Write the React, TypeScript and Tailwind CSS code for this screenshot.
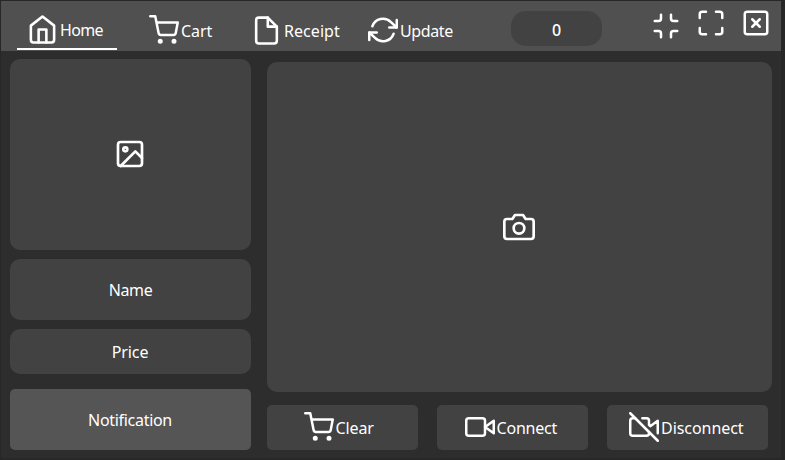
import type { ReactNode } from 'react';
import {
  FiCamera,
  FiFile,
  FiHome,
  FiImage,
  FiMaximize,
  FiMinimize,
  FiRefreshCw,
  FiShoppingCart,
  FiVideo,
  FiVideoOff,
  FiXSquare,
} from 'react-icons/fi';

function Label({ children, className = '' }: { children: ReactNode; className?: string }) {
  return <span className={`whitespace-nowrap leading-5 ${className}`}>{children}</span>;
}

function Header() {
  return (
    <header className="flex h-[50px] w-[780px] items-start bg-[#505050]">
      <nav className="flex h-full">
        <button className="ml-4 flex h-[49px] w-[100px] items-start border-b-2 border-white pl-[10px] pt-3">
          <FiHome size={31} className="mt-px" />
          <Label className="ml-[2px] mt-[7px] tracking-[-0.7px]">Home</Label>
        </button>
        <button className="ml-[32px] flex w-[64px] items-start pt-[13px]">
          <FiShoppingCart size={30} className="mt-px" />
          <Label className="ml-[2px] mt-[7px] tracking-[-0.1px]">Cart</Label>
        </button>
        <button className="ml-[38px] flex w-[90px] items-start pt-[13px]">
          <FiFile size={31} className="mt-px" />
          <Label className="ml-[2px] mt-[7px] tracking-[0.05px]">Receipt</Label>
        </button>
        <button className="ml-[26px] flex w-[87px] items-start pt-[13px]">
          <FiRefreshCw size={30} className="ml-px mt-px" />
          <Label className="ml-[2px] mt-[7px] tracking-[-0.4px]">Update</Label>
        </button>
      </nav>
      <div className="ml-[57px] mt-[10px] flex h-[35px] w-[91px] items-center justify-center rounded-[15px] bg-[#424242]">
        <Label className="mt-[3px] font-medium">0</Label>
      </div>
      <div className="ml-[49px] flex items-start gap-[15px] pt-[7px]">
        <FiMinimize size={30} className="mt-[3px]" />
        <FiMaximize size={30} />
        <FiXSquare size={30} />
      </div>
    </header>
  );
}

export default function App() {
  return (
    <div className="h-[460px] w-[785px] overflow-hidden border-l border-t border-[#272727] bg-[#2d2d2d] font-['Noto_Sans',sans-serif] text-[16px] text-white [font-variant-ligatures:none] tracking-[-0.3px] shadow-[inset_-4px_-2px_0_#272727]">
      <Header />
      <main className="flex pl-[9px]">
        <section className="flex w-[241px] flex-col pt-2">
          <div className="flex h-[191px] items-center justify-center rounded-[10px] bg-[#424242] pb-px pr-px">
            <FiImage size={32} />
          </div>
          <div className="mt-[9px] flex h-[61px] items-center justify-center rounded-[10px] bg-[#424242]">
            <Label className="tracking-[-0.4px]">Name</Label>
          </div>
          <div className="mt-[9px] flex h-[45px] items-center justify-center rounded-[10px] bg-[#424242] pr-px">
            <Label className="tracking-[-0.1px]">Price</Label>
          </div>
          <div className="mt-[15px] flex h-[61px] items-center justify-center rounded-[5px] bg-[#555555] pr-px">
            <Label>Notification</Label>
          </div>
        </section>
        <section className="ml-4 flex w-[505px] flex-col pt-[11px]">
          <div className="flex h-[330px] items-center justify-center rounded-[10px] bg-[#424242] pr-px">
            <FiCamera size={32} />
          </div>
          <div className="mt-[13px] flex gap-[19px]">
            <button className="flex h-[45px] w-[151px] items-start rounded-[5px] bg-[#424242] pl-[37px] pt-[7px]">
              <FiShoppingCart size={30} />
              <Label className="ml-[1.5px] mt-[6px] tracking-[-0.1px]">Clear</Label>
            </button>
            <button className="flex h-[45px] w-[151px] items-start rounded-[5px] bg-[#424242] pl-[28px] pt-[7px]">
              <FiVideo size={30} />
              <Label className="ml-[1.5px] mt-[6px] tracking-[-0.2px]">Connect</Label>
            </button>
            <button className="flex h-[45px] w-[161px] items-start rounded-[5px] bg-[#424242] pl-[22px] pt-[7px]">
              <FiVideoOff size={30} />
              <Label className="ml-[2px] mt-[6px] tracking-[-0.05px]">Disconnect</Label>
            </button>
          </div>
        </section>
      </main>
    </div>
  );
}
